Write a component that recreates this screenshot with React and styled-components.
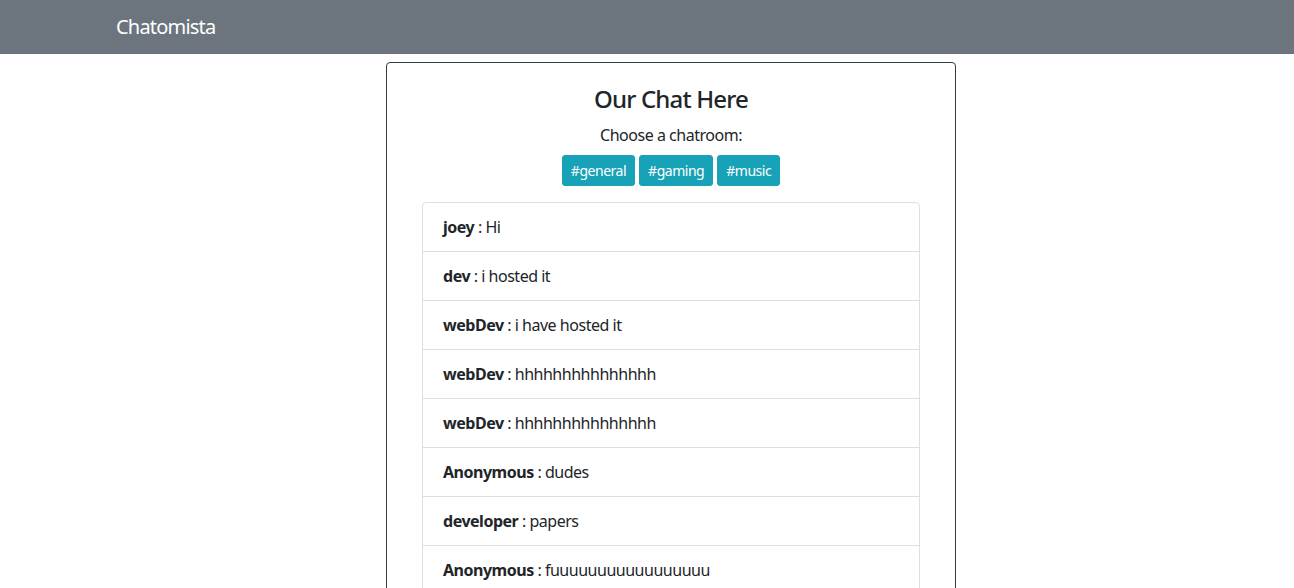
import React from "react"
import styled, { createGlobalStyle } from "styled-components"

const Global = createGlobalStyle`
  body {
    margin: 0;
    font-family: "Segoe UI", "Noto Sans", "Open Sans", sans-serif;
    letter-spacing: -0.03em;
    color: #212529;
    background: #fff;
  }
`

const Navbar = styled.nav`
  display: flex;
  align-items: center;
  height: 54px;
  padding-left: 116px;
  background: #6c757d;
  box-sizing: border-box;
`
const Brand = styled.a`
  font-size: 20px;
  line-height: 30px;
  letter-spacing: -0.04em;
  color: #fff;
  text-decoration: none;
`
const Main = styled.main`
  display: flex;
  padding: 8px 0 0 386px;
`
const Card = styled.section`
  width: 570px;
  box-sizing: border-box;
  border: 1px solid #343a40;
  border-radius: 4px;
  padding: 22px 36px 20px;
  display: flex;
  flex-direction: column;
  align-items: center;
`
const Title = styled.h3`
  margin: 0 0 10px;
  font-size: 24px;
  font-weight: 500;
  line-height: 28px;
  letter-spacing: -0.035em;
`
const Lead = styled.p`
  margin: 0 0 8px;
  font-size: 16px;
  line-height: 24px;
`
const Rooms = styled.div`
  display: flex;
  gap: 4px;
  margin-bottom: 16px;
`
const RoomButton = styled.button`
  font-family: inherit;
  letter-spacing: inherit;
  font-size: 14px;
  line-height: 21px;
  padding: 4px 8px;
  color: #fff;
  background: #17a2b8;
  border: 1px solid #17a2b8;
  border-radius: 3px;
  cursor: pointer;
`
const List = styled.ul`
  list-style: none;
  margin: 0;
  padding: 0;
  width: 100%;
  border: 1px solid rgba(0, 0, 0, 0.125);
  border-radius: 4px;
`
const Item = styled.li`
  padding: 12px 20px;
  font-size: 16px;
  line-height: 24px;
  & + & {
    border-top: 1px solid rgba(0, 0, 0, 0.125);
  }
`
const Name = styled.b`
  font-weight: 700;
`

const messages = [
  ["joey", "Hi"],
  ["dev", "i hosted it"],
  ["webDev", "i have hosted it"],
  ["webDev", "hhhhhhhhhhhhhhh"],
  ["webDev", "hhhhhhhhhhhhhhh"],
  ["Anonymous", "dudes"],
  ["developer", "papers"],
  ["Anonymous", "fuuuuuuuuuuuuuuuuu"],
]

export default function App() {
  return (
    <>
      <Global />
      <Navbar>
        <Brand href="#">Chatomista</Brand>
      </Navbar>
      <Main>
        <Card>
          <Title>Our Chat Here</Title>
          <Lead>Choose a chatroom:</Lead>
          <Rooms>
            <RoomButton>#general</RoomButton>
            <RoomButton>#gaming</RoomButton>
            <RoomButton>#music</RoomButton>
          </Rooms>
          <List>
            {messages.map(([user, text], i) => (
              <Item key={i}>
                <Name>{user}</Name> : {text}
              </Item>
            ))}
          </List>
        </Card>
      </Main>
    </>
  )
}
